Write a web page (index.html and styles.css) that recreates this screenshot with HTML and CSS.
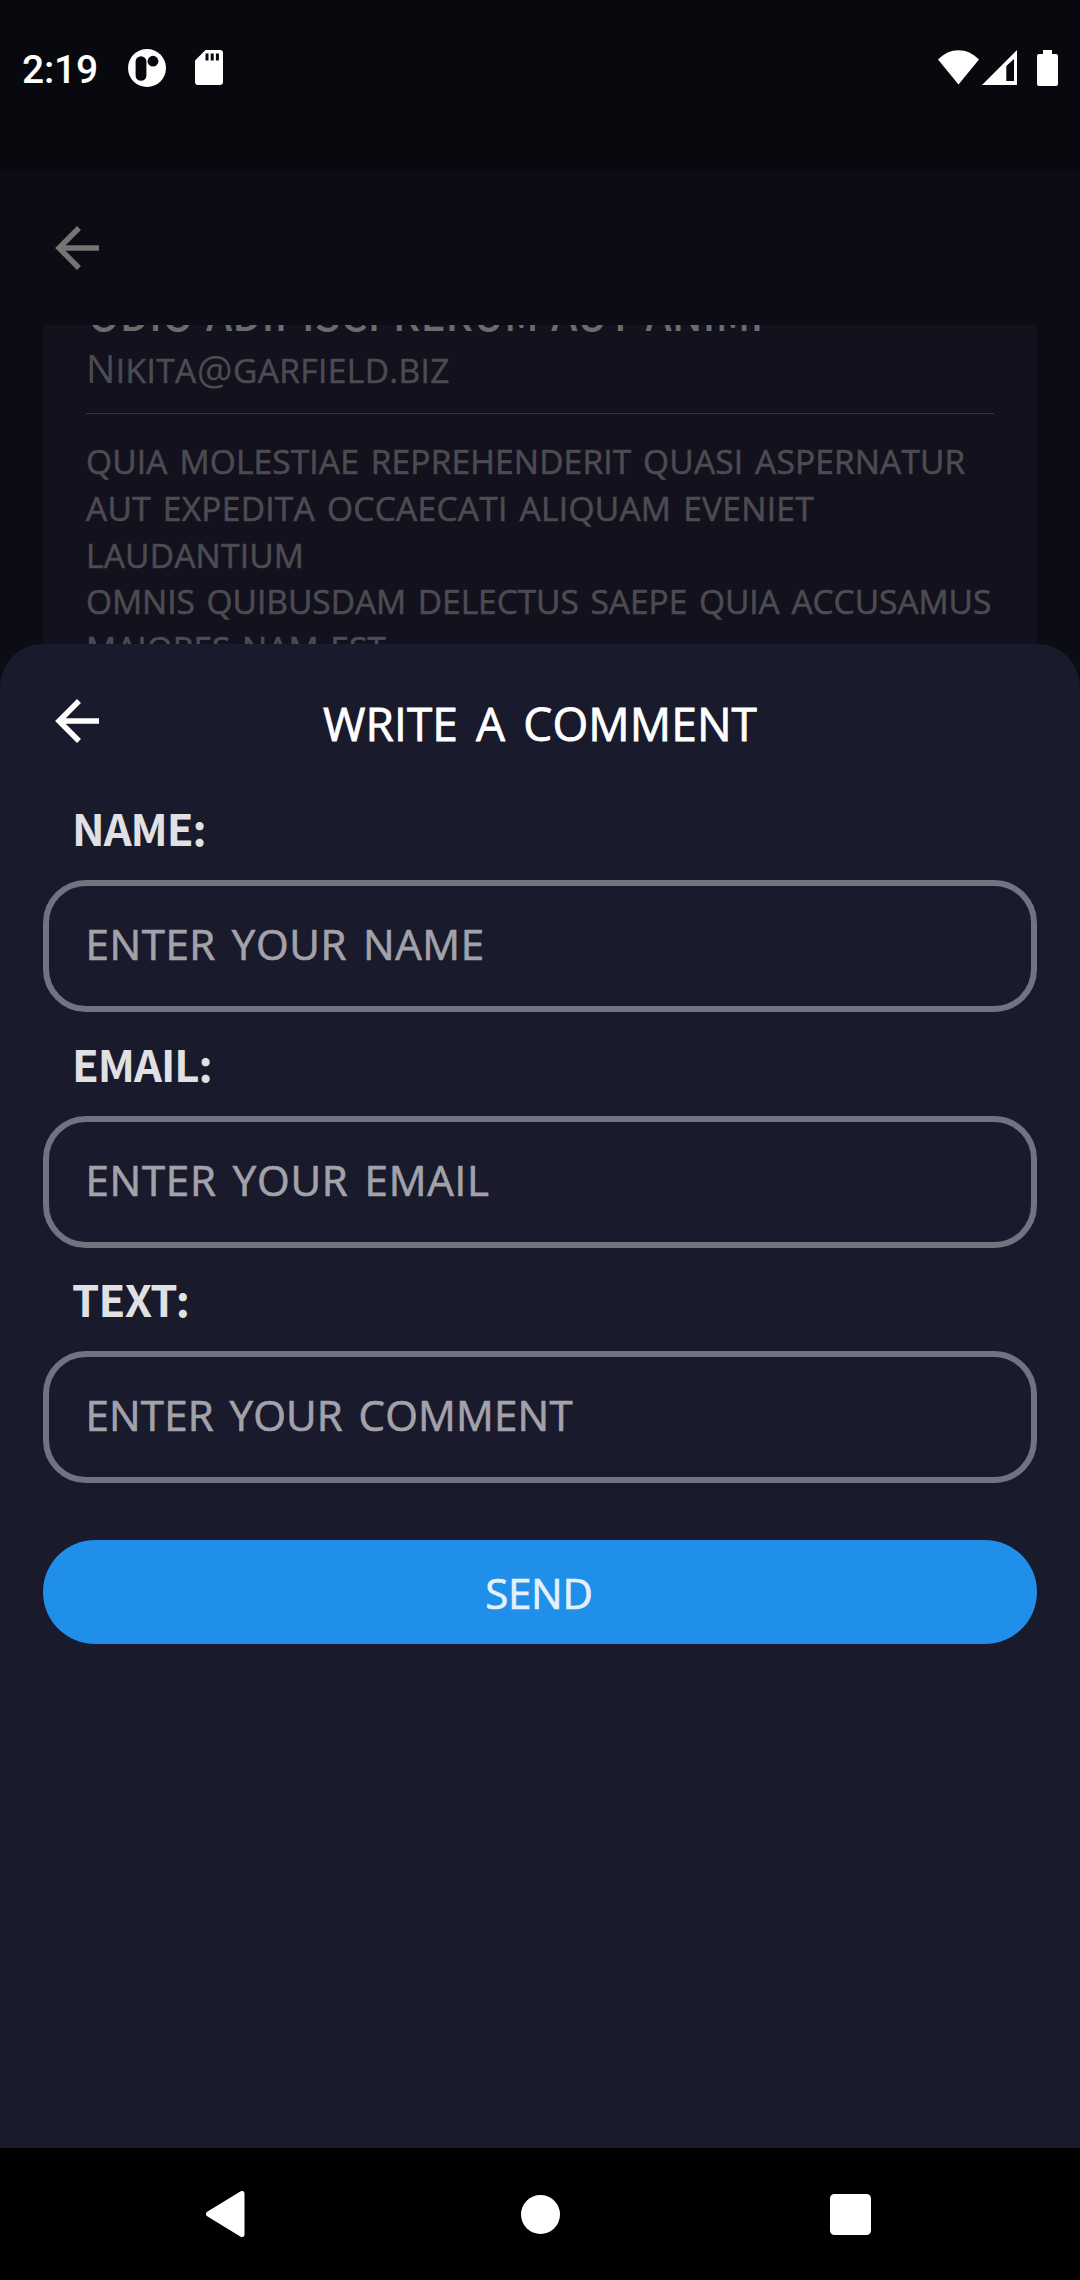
FILE: index.html
```html
<!DOCTYPE html>
<html lang="en">
<head>
<meta charset="utf-8">
<title>Write a comment</title>
<link rel="stylesheet" href="styles.css">
</head>
<body>
<div class="screen">
  <header class="status">
    <span class="clock">2:19</span>
    <svg class="ico-app" viewBox="0 0 38 38"><circle cx="19" cy="19" r="19" fill="#fff"/><rect x="7.6" y="7.2" width="10.8" height="24.6" rx="5.4" fill="#08090e"/><circle cx="25" cy="12.2" r="5.4" fill="#08090e"/></svg>
    <svg class="ico-sd" viewBox="0 0 28 35"><path d="M10.500 0H25a3 3 0 0 1 3 3V32a3 3 0 0 1-3 3H3a3 3 0 0 1-3-3V10.500Z" fill="#fff"/><path d="M10.500 3.500h3v7h-3zM15.700 3.500h3v7h-3zM20.900 3.500h3v7h-3z" fill="#08090e"/></svg>
    <span class="spacer"></span>
    <svg class="ico-wifi" viewBox="0 0 41 35"><path d="M0 9.500C12-3 29-3 41 9.500L20.500 34.500Z" fill="#fff"/></svg>
    <svg class="ico-signal" viewBox="0 0 35 35"><path fill-rule="evenodd" d="M35 0V35H0ZM32 9L24.300 16V31H32Z" fill="#fff"/></svg>
    <svg class="ico-battery" viewBox="0 0 21 36"><path d="M6 0h9v4h4a2 2 0 0 1 2 2v28a2 2 0 0 1-2 2H2a2 2 0 0 1-2-2V6a2 2 0 0 1 2-2h4z" fill="#fff"/></svg>
  </header>
  <div class="topbar">
    <svg class="arrow arrow-dim" viewBox="0 0 44 44"><path d="M44 22H5M24 2L4 22L24 42"/></svg>
  </div>
  <div class="feed">
    <article class="card">
      <h2 class="card-title">ODIO ADIPISCI RERUM AUT ANIMI</h2>
      <div class="card-mail"><span class="initial">N</span>IKITA<span class="at">@</span>GARFIELD.BIZ</div>
      <div class="card-text">
        <div class="line l1">QUIA MOLESTIAE REPREHENDERIT QUASI ASPERNATUR</div>
        <div class="line l2">AUT EXPEDITA OCCAECATI ALIQUAM EVENIET</div>
        <div class="line l3">LAUDANTIUM</div>
        <div class="line l4">OMNIS QUIBUSDAM DELECTUS SAEPE QUIA ACCUSAMUS</div>
        <div class="line l5">MAIORES NAM EST</div>
      </div>
    </article>
  </div>
  <main class="sheet">
    <div class="sheet-head">
      <svg class="arrow" viewBox="0 0 44 44"><path d="M44 22H5M24 2L4 22L24 42"/></svg>
      <h1 class="sheet-title">WRITE A COMMENT</h1>
    </div>
    <div class="form">
      <div class="group"><div class="label">NAME:</div><div class="field f-name">ENTER YOUR NAME</div></div>
      <div class="group"><div class="label">EMAIL:</div><div class="field f-email">ENTER YOUR EMAIL</div></div>
      <div class="group"><div class="label l-text">TEXT:</div><div class="field f-text">ENTER YOUR COMMENT</div></div>
    </div>
    <div class="send">SEND</div>
  </main>
  <nav class="nav">
    <svg class="nav-back" viewBox="0 0 39 46"><path d="M36 2.500V43.500L2.500 23Z" fill="#fff" stroke="#fff" stroke-width="5" stroke-linejoin="round"/></svg>
    <svg class="nav-home" viewBox="0 0 39 39"><circle cx="19.500" cy="19.500" r="19.500" fill="#fff"/></svg>
    <svg class="nav-recent" viewBox="0 0 41 41"><rect width="41" height="41" rx="4.500" fill="#fff"/></svg>
  </nav>
</div>
</body>
</html>
```
FILE: styles.css
```css
* { box-sizing: border-box; }
body { margin: 0; background: #000; }
svg { display: block; flex: none; }
h1, h2 { margin: 0; }

.screen {
  width: 1080px;
  height: 2280px;
  display: flex;
  flex-direction: column;
  overflow: hidden;
  background: #0b0c14;
  font-family: "Open Sans", sans-serif;
  white-space: nowrap;
}

/* status bar */
.status {
  flex: none;
  height: 171px;
  padding: 0 22px 36px;
  display: flex;
  align-items: center;
  background: #08090e;
}
.clock {
  width: 106px;
  font: 500 39px/46px Roboto, sans-serif;
  color: #fff;
  letter-spacing: -0.2px;
  padding-top: 4px;
}
.ico-app { width: 38px; height: 38px; }
.ico-sd { width: 28px; height: 35px; margin-left: 28.500px; }
.spacer { flex: 1; }
.ico-wifi { width: 41px; height: 35px; }
.ico-signal { width: 35px; height: 35px; margin-left: 3px; }
.ico-battery { width: 21px; height: 36px; margin-left: 20px; }

/* dimmed screen behind the sheet */
.topbar {
  flex: none;
  height: 154px;
  padding-left: 55px;
  display: flex;
  align-items: center;
}
.arrow { width: 44px; height: 44px; fill: none; stroke: #fff; stroke-width: 5.500; }
.arrow-dim { stroke: #747474; }
.feed {
  flex: none;
  height: 379px;
  margin-bottom: -60px; /* runs on under the rounded corners of the sheet */
  padding: 0 43px;
  overflow: hidden;
}
.card { height: 400px; padding: 0 43px; background: #12111d; color: #4c4b51; display: flow-root; }
.card-title {
  margin-top: -40px;
  padding-left: 2px;
  font-family: "Noto Sans CJK JP", sans-serif;
  font-size: 42px;
  line-height: 56px;
  font-weight: 500;
  word-spacing: 3px;
  color: #6b6b6d;
}
.card-mail {
  height: 73px;
  padding-top: 4px;
  font-size: 33.500px;
  line-height: 50px;
  letter-spacing: 0.400px;
  border-bottom: 1px solid #35343f;
  margin-bottom: 24.200px;
  -webkit-text-stroke: 0.500px;
}
.initial { font-size: 39px; line-height: 0; -webkit-text-stroke: 0; }
.at { font-size: 40px; line-height: 0; vertical-align: -2px; -webkit-text-stroke: 0; }
.line {
  font-size: 33.500px;
  line-height: 46.750px;
  word-spacing: 3px;
  -webkit-text-stroke: 0.600px;
}
.l1 { letter-spacing: 0.140px; }
.l2 { letter-spacing: 0.270px; }
.l3 { letter-spacing: 0.200px; }
.l4 { letter-spacing: -0.040px; }
.l5 { letter-spacing: 0; }

/* comment sheet */
.sheet {
  flex: 1;
  position: relative;
  padding: 47px 43px 0;
  border-radius: 43px 43px 0 0;
  background: #1a1a2d;
}
.sheet-head {
  height: 60px;
  padding-left: 12px;
  display: grid;
  grid-template-columns: 44px 1fr 56px;
  grid-template-rows: 60px;
  align-items: center;
}
.sheet-title {
  padding-top: 4px;
  text-align: center;
  font-size: 46px;
  font-weight: 400;
  line-height: 62px;
  letter-spacing: 0.100px;
  word-spacing: 6px;
  -webkit-text-stroke: 0.800px;
  color: #fff;
}
.form { margin-top: 51px; display: flex; flex-direction: column; gap: 25.500px; }
.label {
  height: 50px;
  margin-bottom: 28px;
  padding-left: 29px;
  font-family: "Noto Sans CJK JP", sans-serif;
  font-size: 43.600px;
  line-height: 51px;
  font-weight: 700;
  letter-spacing: -1px;
  color: #e1e1e3;
}
.l-text { letter-spacing: -0.700px; }
.field {
  height: 132px;
  padding-left: 36.500px;
  border: 6px solid #73727e;
  border-radius: 43px;
  font-size: 42px;
  line-height: 115px;
  word-spacing: 4.500px;
  -webkit-text-stroke: 0.700px;
  color: #a3a2aa;
}
.f-name { letter-spacing: 0.600px; }
.f-email { letter-spacing: 0.750px; }
.f-text { letter-spacing: 0.200px; }
.send {
  margin-top: 57px;
  padding-right: 2px;
  height: 104px;
  border-radius: 52px;
  background: #208fe9;
  color: #e4f1fc;
  font-size: 42px;
  line-height: 106px;
  letter-spacing: -0.200px;
  -webkit-text-stroke: 0.700px;
  text-align: center;
}

/* system navigation */
.nav {
  flex: none;
  height: 132px;
  padding: 0 209px 0 206px;
  display: flex;
  align-items: center;
  justify-content: space-between;
  background: #000;
}
.nav-back { width: 39px; height: 46px; }
.nav-home { width: 39px; height: 39px; margin-left: 5px; }
.nav-recent { width: 41px; height: 41px; }
```
